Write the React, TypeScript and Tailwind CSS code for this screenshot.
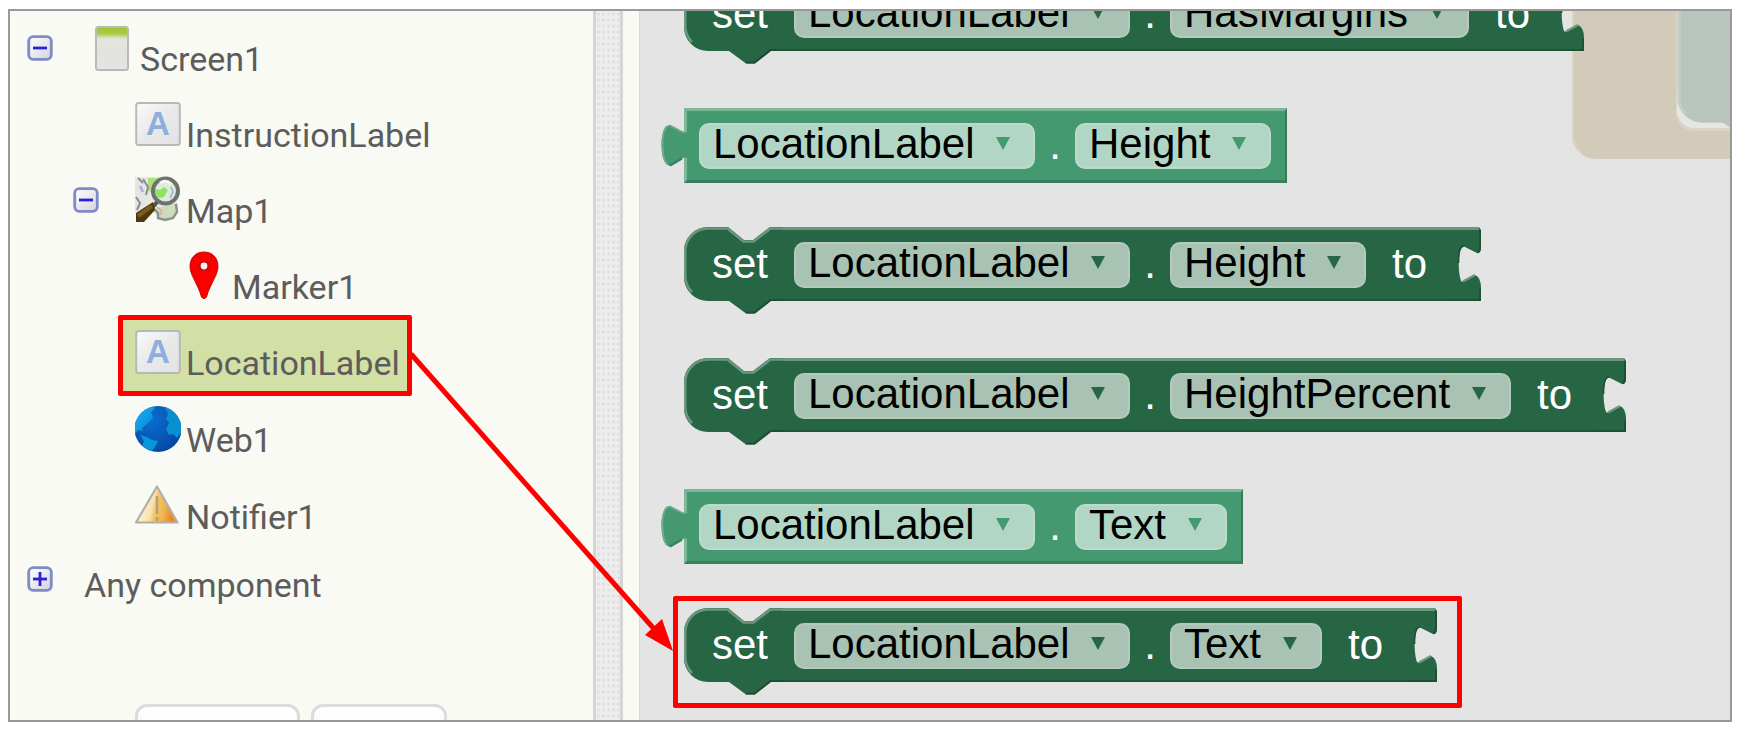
import type { ReactNode } from 'react';

type IconName = 'screen' | 'label' | 'map' | 'marker' | 'web' | 'notifier';

function ToggleIcon({ open }: { open: boolean }) {
  return (
    <svg viewBox="0 0 26 26" className="block size-[26px]" aria-hidden="true">
      <defs>
        <linearGradient id="toggleFill" x1="0" y1="0" x2="1" y2="1">
          <stop offset="0" stopColor="#ffffff" />
          <stop offset="1" stopColor="#d2d4dc" />
        </linearGradient>
      </defs>
      <rect x="1.7" y="1.7" width="22.6" height="22.6" rx="4.5" fill="url(#toggleFill)" stroke="#7f8bc6" strokeWidth="2.8" />
      <path d="M6 13H20" stroke="#2a22d6" strokeWidth="2.8" />
      {!open && <path d="M13 6V20" stroke="#2a22d6" strokeWidth="2.8" />}
    </svg>
  );
}

function Frame({ children }: { children: ReactNode }) {
  return (
    <svg viewBox="0 0 46 48" className="h-12 w-[46px] shrink-0" aria-hidden="true">
      {children}
    </svg>
  );
}

function ScreenIcon() {
  return (
    <Frame>
      <defs>
        <linearGradient id="screenFill" x1="0" y1="0" x2="0" y2="1">
          <stop offset="0" stopColor="#a3c52f" />
          <stop offset="0.16" stopColor="#adca45" />
          <stop offset="0.27" stopColor="#e2e4dc" />
          <stop offset="1" stopColor="#e3e3e3" />
        </linearGradient>
      </defs>
      <rect x="7" y="4" width="32" height="43" rx="2.5" fill="url(#screenFill)" stroke="#b9b9b9" strokeWidth="2" />
    </Frame>
  );
}

function LabelIcon() {
  return (
    <Frame>
      <defs>
        <linearGradient id="labelFill" x1="0" y1="0" x2="1" y2="1">
          <stop offset="0" stopColor="#fafafa" />
          <stop offset="0.5" stopColor="#e9e9ea" />
          <stop offset="1" stopColor="#e2e2e2" />
        </linearGradient>
      </defs>
      <rect x="1.2" y="4" width="43.6" height="42" rx="2.5" fill="url(#labelFill)" stroke="#b8b8b8" strokeWidth="2" />
      <text x="23" y="36" textAnchor="middle" fontSize="33" fontWeight="700" fontFamily="Liberation Sans, sans-serif" fill="#8eafdc">
        A
      </text>
    </Frame>
  );
}

function MapIcon() {
  return (
    <Frame>
      <path d="M0 2H36Q43 5 43 14L41 40Q38 46 31 45L24 44L18 36L2 38Z" fill="#e6e9e4" />
      <path d="M0 2H14L10 14L13 27L2 38L0 38Z" fill="#e4e6e4" />
      <path d="M13 3H26L18 12L19 20L13 15Z" fill="#a9e078" />
      <path d="M22 33L42 28L40 41Q36 45 30 44L24 42L19 35Z" fill="#ccdcbd" />
      <path d="M3 3L8 8M8 4L13 12L11 20M1 22L5 28L2 35" stroke="#8d8d90" strokeWidth="2" fill="none" />
      <path d="M5 11L8 17" stroke="#a9aee0" strokeWidth="2.5" />
      <path d="M19 34L23 38L23 43L30 45L38 43L42 37L41 29" stroke="#8d9389" strokeWidth="2.4" fill="none" />
      <path d="M22 32L27 36L25 40" stroke="#e1a7a0" strokeWidth="1.6" fill="none" />
      <path d="M23 26L16 34" stroke="#55524a" strokeWidth="4" />
      <path d="M18 27L1 38V47H9L20 35Z" fill="#4d390d" />
      <path d="M17 31L3 41" stroke="#7a5a20" strokeWidth="4" />
      <circle cx="30.500" cy="16" r="12.500" fill="#dcebdc" stroke="#6d726c" strokeWidth="4" />
      <path d="M20 14L25 15L29 12L33 15L29 22L24 23L20 19Z" fill="#91e164" />
      <path d="M25 8Q31 4 36 9" stroke="#f4f9f4" strokeWidth="3" fill="none" />
      <path d="M36 12L38 17L35 23" stroke="#a9b9dc" strokeWidth="2" fill="none" />
    </Frame>
  );
}

function MarkerIcon() {
  return (
    <Frame>
      <path
        d="M23 1C31.500 1 37 7 37 15.500C37 24 29 33 25.500 46Q23 49.500 20.500 46C17 33 9 24 9 15.500C9 7 14.500 1 23 1Z"
        fill="#fb0000"
        stroke="#c80a0a"
        strokeWidth="1"
      />
      <circle cx="23" cy="15" r="4.200" fill="#fdeeee" stroke="#a51515" strokeWidth="1.600" />
    </Frame>
  );
}

function WebIcon() {
  return (
    <Frame>
      <defs>
        <radialGradient id="globeSea" cx="0.35" cy="0.3" r="0.8">
          <stop offset="0" stopColor="#0a6ed0" />
          <stop offset="1" stopColor="#0346a0" />
        </radialGradient>
        <linearGradient id="globeLand" x1="0" y1="0" x2="1" y2="1">
          <stop offset="0" stopColor="#22b0ff" />
          <stop offset="1" stopColor="#0083c8" />
        </linearGradient>
        <clipPath id="globeClip">
          <ellipse cx="23" cy="25" rx="23.500" ry="23" />
        </clipPath>
      </defs>
      <g clipPath="url(#globeClip)">
        <rect y="2" width="46" height="46" fill="url(#globeSea)" />
        <path d="M4 8L18 2L20 5L16 8L18 14L13 19L7 24L8 27L3 26L0 30V12Z" fill="url(#globeLand)" />
        <path d="M5 31L12 33L17 36L23 37L20 43L16 48L7 42L9 37Z" fill="#0796dc" />
        <path d="M29 2L38 4L46 15V29L42 34L38 30L34 31L31 25L34 19L31 15L33 10Z" fill="#078fd0" />
      </g>
    </Frame>
  );
}

function NotifierIcon() {
  return (
    <Frame>
      <defs>
        <linearGradient id="warnFill" x1="0" y1="0.4" x2="1" y2="0.6">
          <stop offset="0.1" stopColor="#fff4dc" />
          <stop offset="0.4" stopColor="#fae0ad" />
          <stop offset="0.5" stopColor="#f3c568" />
          <stop offset="0.7" stopColor="#f0b552" />
          <stop offset="0.9" stopColor="#e98a2c" />
        </linearGradient>
      </defs>
      <path d="M22 5.500L42.500 41.500H1Z" fill="url(#warnFill)" stroke="#b3afa2" strokeWidth="2.200" strokeLinejoin="round" />
      <path d="M22 15V33M22 36V40" stroke="#b8a070" strokeWidth="2.600" />
    </Frame>
  );
}

const icons: Record<IconName, () => ReactNode> = {
  screen: ScreenIcon,
  label: LabelIcon,
  map: MapIcon,
  marker: MarkerIcon,
  web: WebIcon,
  notifier: NotifierIcon,
};

type Node = { name: string; icon: IconName; indent: string; open?: boolean; selected?: boolean; height: string };

const nodes: Node[] = [
  { name: 'Screen1', icon: 'screen', indent: 'pl-[17px]', open: true, height: 'h-[76px]' },
  { name: 'InstructionLabel', icon: 'label', indent: 'pl-[63px]', height: 'h-[76px]' },
  { name: 'Map1', icon: 'map', indent: 'pl-[63px]', open: true, height: 'h-[76px]' },
  { name: 'Marker1', icon: 'marker', indent: 'pl-[109px]', height: 'h-[76px]' },
  { name: 'LocationLabel', icon: 'label', indent: 'pl-[63px]', selected: true, height: 'h-[77px]' },
  { name: 'Web1', icon: 'web', indent: 'pl-[63px]', height: 'h-[77px]' },
  { name: 'Notifier1', icon: 'notifier', indent: 'pl-[63px]', height: 'h-[77px]' },
];

function ComponentTree() {
  return (
    <nav className="flex w-[583px] shrink-0 flex-col bg-[#f8faf3] pt-3 text-[34px] leading-[38px] text-[#5c5c5c]" aria-label="Components">
      <ul>
        {nodes.map((node) => {
          const Icon = icons[node.icon];
          return (
            <li key={node.name} className={`flex items-start gap-9 ${node.indent} ${node.height}`}>
              <span className="w-[26px] pt-3">
                {node.open && (
                  <button type="button" className="block" aria-label={`Collapse ${node.name}`}>
                    <ToggleIcon open />
                  </button>
                )}
              </span>
              <button type="button" className="relative isolate flex items-baseline gap-[5px]">
                {node.selected && (
                  <span className="absolute -top-3 -right-3 -bottom-3.5 -left-[17px] -z-10 rounded-xs border-5 border-[#ff0000] bg-[#d2dfa5]" />
                )}
                <Icon />
                <span>{node.name}</span>
              </button>
            </li>
          );
        })}
        <li className="flex items-start gap-[31px] pt-2 pl-[17px]">
          <button type="button" className="block" aria-label="Expand Any component">
            <ToggleIcon open={false} />
          </button>
          <button type="button">Any component</button>
        </li>
      </ul>
      <div className="mt-auto flex h-4 shrink-0 gap-[11px] pl-[125px]">
        <button type="button" aria-label="Rename" className="h-14 w-[165px] rounded-xl border-3 border-[#dcdcdc] bg-gradient-to-b from-white to-[#f4f4f4]" />
        <button type="button" aria-label="Delete" className="h-14 w-[136px] rounded-xl border-3 border-[#dcdcdc] bg-gradient-to-b from-white to-[#f4f4f4]" />
      </div>
    </nav>
  );
}

function Dropdown({ label, value, tone }: { label: string; value: string; tone: 'dark' | 'light' }) {
  return (
    <span
      className={`relative flex h-[46px] items-center rounded-[10px] border-2 ${
        tone === 'dark' ? 'border-[#b3cabd] bg-[#a8c2b3]' : 'border-[#bbdccc] bg-[#b2d6c5]'
      }`}
    >
      <select aria-label={label} defaultValue={value} className="mb-1 h-14 appearance-none bg-transparent pr-[58px] pl-3 leading-14 text-black">
        <option>{value}</option>
      </select>
      <svg
        viewBox="0 0 14 13"
        className={`pointer-events-none absolute top-3 right-[23px] h-[13px] w-[14px] ${tone === 'dark' ? 'fill-[#276645]' : 'fill-[#449970]'}`}
        aria-hidden="true"
      >
        <path d="M0 0H14L7 13Z" />
      </svg>
    </span>
  );
}

function SetterBlock({ property, marked }: { property: string; marked?: boolean }) {
  return (
    <div className="relative isolate ml-6 flex h-[87px] items-start pt-[15px] pr-[54px] pl-7 text-white">
      {marked && <span className="absolute -top-3 -right-[25px] -bottom-[13px] -left-[11px] rounded-xs border-5 border-[#ff0000]" />}
      <div className="absolute inset-0 -z-10 flex" aria-hidden="true">
        <svg viewBox="0 0 100 87" className="h-[87px] w-[100px] shrink-0">
          <path d="M24 0H44L60 13H69L86 0H100V74H87L71 86.500H62L45 74H24A24 24 0 0 1 0 50V24A24 24 0 0 1 24 0Z" fill="#276645" />
          <path d="M8 65A24 24 0 0 1 1.200 50V24A22.800 22.800 0 0 1 24 1.500H43.500L59.500 14.500H69.500L86.500 1.500H100" fill="none" stroke="#6a977e" strokeWidth="2.600" />
          <path d="M100 73H86.500L70.500 85.500H62" fill="none" stroke="#1d4f35" strokeWidth="2" />
        </svg>
        <div className="-mx-px h-[74px] flex-1 border-t-3 border-b-2 border-t-[#6a977e] border-b-[#1f5539] bg-[#276645]" />
        <svg viewBox="0 0 30 87" className="h-[87px] w-[30px] shrink-0">
          <path d="M0 0H28L30 3V20Q30 27 26 26L15 20.500C7 15 6 42 10 54Q11 55 13 54L24 48Q29.500 50 30 60V74H0Z" fill="#276645" />
          <path d="M0 1.500H28" stroke="#6a977e" strokeWidth="3" />
          <path d="M0 73H29V62M29 3V20Q29 25 26 25" fill="none" stroke="#1d5136" strokeWidth="2" />
          <path d="M13 19Q7.500 18 7.500 36" fill="none" stroke="#1d5136" strokeWidth="1.600" />
          <path d="M12 54.500L24 48" stroke="#6a977e" strokeWidth="2.400" />
        </svg>
      </div>
      <span className="w-14">set</span>
      <span className="w-[26px]" />
      <Dropdown label="Component" value="LocationLabel" tone="dark" />
      <span className="w-10 text-center">.</span>
      <Dropdown label="Property" value={property} tone="dark" />
      <span className="pl-[26px]">to</span>
    </div>
  );
}

function GetterBlock({ property }: { property: string }) {
  return (
    <div className="relative isolate ml-6 flex h-[75px] items-start border-t-3 border-r-2 border-b-3 border-l-3 border-t-[#7cb798] border-r-[#367a5a] border-b-[#387f5d] border-l-[#7cb798] bg-[#449970] pt-3 pr-3.5 pl-3 text-white">
      <svg viewBox="0 0 29 44" className="absolute top-[13px] -left-[26px] h-11 w-[29px]" aria-hidden="true">
        <path d="M29 7Q25 10 21 7L10 1.500C4 -1 0 10 0.500 22C0.500 34 4 41 9 42L21 34.500Q25 32.500 29 35Z" fill="#449970" />
        <path d="M8 2C3 2 1 12 1.500 22Q2 35 6 40M9 1.500L20 7.500Q22 8.500 24 8" fill="none" stroke="#6cae8b" strokeWidth="1.800" />
        <path d="M9 41.500L21 34.500" stroke="#387f5d" strokeWidth="2.200" />
      </svg>
      <Dropdown label="Component" value="LocationLabel" tone="light" />
      <span className="w-10 text-center">.</span>
      <Dropdown label="Property" value={property} tone="light" />
    </div>
  );
}

function WorkspaceBlock() {
  return (
    <svg viewBox="0 0 158 148" className="absolute top-0 right-0 h-[148px] w-[158px]" aria-hidden="true">
      <path d="M0 0H158V148H24A24 24 0 0 1 0 124Z" fill="#d3cbb9" />
      <path d="M1 0V124Q2 134 9 141" fill="none" stroke="#dad3c3" strokeWidth="2" />
      <path d="M104 0H158V120H122A18 18 0 0 1 104 100Z" fill="#dad4c8" />
      <path d="M105 80L107 80V88A23 23 0 0 0 130 111.500H151L158 117H123A18 18 0 0 1 105 96Z" fill="#e6e6e5" />
      <path d="M106 0H158V116L151 111.500H130A24 23.500 0 0 1 106 88Z" fill="#bac4bf" />
      <path d="M107 0V88Q107 96 114 103" fill="none" stroke="#c5cdc9" strokeWidth="3" />
    </svg>
  );
}

function Flyout() {
  return (
    <section className="relative flex-1 overflow-hidden border-l border-[#d9dad6] bg-[#e4e4e4] pl-5 font-['Liberation_Sans',Arial,sans-serif] text-[42px] leading-[44px]" aria-label="Blocks">
      <WorkspaceBlock />
      <div className="relative -mt-[34px] flex flex-col items-start gap-11">
        <SetterBlock property="HasMargins" />
        <GetterBlock property="Height" />
        <SetterBlock property="Height" />
        <SetterBlock property="HeightPercent" />
        <GetterBlock property="Text" />
        <SetterBlock property="Text" marked />
      </div>
    </section>
  );
}

export default function App() {
  return (
    <div className="h-screen overflow-hidden bg-white px-2 pt-[9px] pb-[11px] font-['Roboto',sans-serif]">
      <main className="relative flex h-full overflow-hidden border-2 border-[#999999]">
        <ComponentTree />
        <div className="w-[30px] shrink-0 border-x-3 border-[#d5d5d5] bg-[#ededed] bg-[radial-gradient(circle,#dfdfdf_1px,transparent_2px)] bg-[size:5px_6px]" />
        <div className="w-4 shrink-0 bg-[#f8faf3]" />
        <Flyout />
        <svg viewBox="0 0 270 310" className="pointer-events-none absolute top-[340px] left-[400px] h-[310px] w-[270px]" aria-hidden="true">
          <path d="M1 3L245 279" stroke="#ff0000" strokeWidth="5" />
          <path d="M263 300L235 284L252 268Z" fill="#ff0000" />
        </svg>
      </main>
    </div>
  );
}
